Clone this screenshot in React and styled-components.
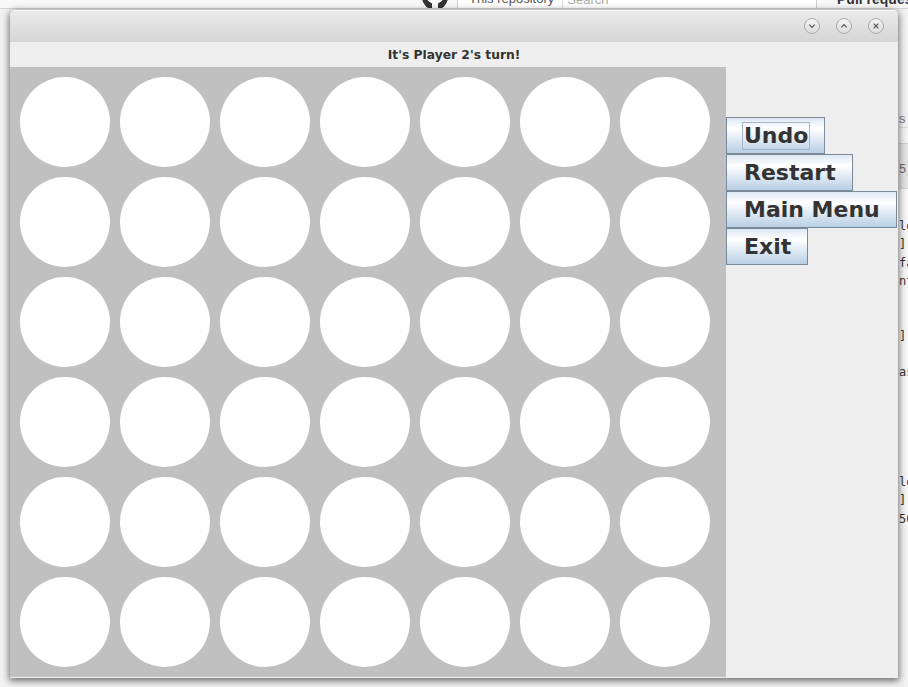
import React from "react";
import styled, { createGlobalStyle } from "styled-components";

const ROWS = 6;
const COLS = 7;

const codeLines = ["le", "]:", "fa", "nt", "  (", "", "]:", "", "as", "", "  W", "", "", "", "le", "]:", "50"];

export default function App() {
  return (
    <>
      <GlobalStyle />
      <Desktop>
        <Page>
          <TopBar>
            <TopBarInner>
              <Octocat viewBox="0 0 30 30">
                <circle cx="15" cy="15" r="13" fill="#333" />
                <circle cx="15" cy="13" r="9" fill="#f7f7f7" />
                <rect x="12" y="20" width="6" height="10" fill="#f7f7f7" />
              </Octocat>
              <SearchBox>
                <Scope>This repository</Scope>
                <Placeholder>Search</Placeholder>
              </SearchBox>
              <NavLink>Pull requests</NavLink>
            </TopBarInner>
          </TopBar>
          <PageBody>
            <SideContent>
              <TabText>s</TabText>
              <TabRule />
              <FileHeader>5,</FileHeader>
              <Code>
                {codeLines.map((line, i) => (
                  <CodeLine key={i}>{line || " "}</CodeLine>
                ))}
              </Code>
            </SideContent>
          </PageBody>
        </Page>

        <Window>
          <TitleBar>
            <WinButton>
              <svg width="8" height="8" viewBox="0 0 8 8">
                <path d="M1.3 2.6 L4 5.4 L6.7 2.6" />
              </svg>
            </WinButton>
            <WinButton>
              <svg width="8" height="8" viewBox="0 0 8 8">
                <path d="M1.3 5.4 L4 2.6 L6.7 5.4" />
              </svg>
            </WinButton>
            <WinButton>
              <svg width="8" height="8" viewBox="0 0 8 8">
                <path d="M1.6 1.6 L6.4 6.4 M6.4 1.6 L1.6 6.4" />
              </svg>
            </WinButton>
          </TitleBar>
          <StatusBar>It's Player 2's turn!</StatusBar>
          <Main>
            <Board>
              {Array.from({ length: ROWS * COLS }).map((_, i) => (
                <Slot key={i} />
              ))}
            </Board>
            <SidePanel>
              <GameButton>
                <Focus>Undo</Focus>
              </GameButton>
              <GameButton>Restart</GameButton>
              <GameButton>Main Menu</GameButton>
              <GameButton>Exit</GameButton>
            </SidePanel>
          </Main>
        </Window>
      </Desktop>
    </>
  );
}

const GlobalStyle = createGlobalStyle`
  html, body {
    margin: 0;
    padding: 0;
    width: 908px;
    height: 687px;
    overflow: hidden;
  }
  * {
    box-sizing: border-box;
  }
`;

const Desktop = styled.div`
  position: relative;
  width: 908px;
  height: 687px;
  overflow: hidden;
  background: #f2f2f2;
  font-family: "DejaVu Sans", "Liberation Sans", sans-serif;
`;

const Page = styled.div`
  display: flex;
  flex-direction: column;
  width: 100%;
  height: 100%;
`;

const TopBar = styled.div`
  height: 9px;
  overflow: hidden;
  background: #f8f8f8;
  border-bottom: 1px solid #d6d6d6;
`;

const TopBarInner = styled.div`
  display: flex;
  align-items: center;
  height: 20px;
  margin-top: -11px;
  padding-left: 420px;

  & > * {
    flex-shrink: 0;
  }
`;

const Octocat = styled.svg`
  width: 30px;
  height: 30px;
  margin-top: -4px;
`;

const SearchBox = styled.div`
  display: flex;
  align-items: center;
  margin-left: 7px;
  width: 360px;
  height: 28px;
  margin-top: -8px;
  padding-top: 8px;
  border: 1px solid #cfcfcf;
  background: #fff;
  font-family: "Liberation Sans", Arial, sans-serif;
  font-size: 13px;
`;

const Scope = styled.span`
  color: #555;
  padding: 0 8px 0 11px;
  border-right: 1px solid #dcdcdc;
  line-height: 20px;
`;

const Placeholder = styled.span`
  color: #aaa;
  padding-left: 4px;
`;

const NavLink = styled.span`
  margin-left: 20px;
  font-family: "Liberation Sans", Arial, sans-serif;
  font-weight: bold;
  font-size: 14px;
  color: #333;
  white-space: nowrap;
`;

const PageBody = styled.div`
  flex: 1;
  display: flex;
  padding-left: 899px;
`;

const SideContent = styled.div`
  display: flex;
  flex-direction: column;
  width: 200px;
  padding-top: 103px;
`;

const TabText = styled.div`
  font-family: "Liberation Sans", Arial, sans-serif;
  font-size: 13px;
  line-height: 14px;
  color: #777;
`;

const TabRule = styled.div`
  height: 1px;
  margin-top: 1px;
  background: #dcdcdc;
`;

const FileHeader = styled.div`
  margin-top: 15px;
  height: 46px;
  padding-top: 19px;
  background: #e2e2e2;
  border-top: 1px solid #cccccc;
  border-bottom: 1px solid #d0d0d0;
  font-family: "Liberation Mono", monospace;
  font-size: 12px;
  color: #666;
`;

const Code = styled.div`
  padding-top: 28px;
  background: #f6f6f6;
`;

const CodeLine = styled.div`
  font-family: "DejaVu Sans Mono", "Liberation Mono", monospace;
  font-size: 12px;
  line-height: 18.3px;
  height: 18.3px;
  color: #333;
  white-space: pre;
`;

const Window = styled.div`
  position: absolute;
  left: 10px;
  top: 10px;
  width: 888px;
  height: 668px;
  display: flex;
  flex-direction: column;
  background: #eeeeee;
  border-radius: 5px 5px 0 0;
  box-shadow: 0 2px 7px 1px rgba(0, 0, 0, 0.55);
  overflow: hidden;
`;

const TitleBar = styled.div`
  height: 32px;
  flex-shrink: 0;
  display: flex;
  justify-content: flex-end;
  align-items: center;
  gap: 16px;
  padding: 0 14px 2px 0;
  background: linear-gradient(#ebebeb, #d4d4d4);
  border-top: 1px solid #f6f6f6;
`;

const WinButton = styled.div`
  width: 16px;
  height: 16px;
  border-radius: 50%;
  border: 1px solid #acacac;
  background: linear-gradient(#f3f3f3, #dcdcdc);
  display: flex;
  align-items: center;
  justify-content: center;

  svg path {
    fill: none;
    stroke: #555;
    stroke-width: 1.2;
  }
`;

const StatusBar = styled.div`
  height: 25px;
  flex-shrink: 0;
  display: flex;
  align-items: center;
  justify-content: center;
  font-family: "DejaVu Sans", sans-serif;
  font-weight: bold;
  font-size: 12.3px;
  color: #333;
  background: #eeeeee;
`;

const Main = styled.div`
  flex: 1;
  display: flex;
`;

const Board = styled.div`
  width: 716px;
  height: 610px;
  flex-shrink: 0;
  display: grid;
  grid-template-columns: repeat(7, 90px);
  grid-auto-rows: 90px;
  gap: 10px;
  padding: 10px 0 0 10px;
  background: #c0c0c0;
`;

const Slot = styled.div`
  width: 90px;
  height: 90px;
  border-radius: 50%;
  background: #ffffff;
`;

const SidePanel = styled.div`
  flex: 1;
  display: flex;
  flex-direction: column;
  align-items: flex-start;
  padding-top: 50px;
  background: #eeeeee;
`;

const GameButton = styled.div`
  height: 37px;
  display: flex;
  align-items: center;
  padding: 0 16px 0 17px;
  border: 1px solid #7a8a99;
  background: linear-gradient(#dde8f3 0%, #ffffff 30%, #b8cfe5 100%);
  font-family: "DejaVu Sans", sans-serif;
  font-weight: bold;
  font-size: 22px;
  color: #333333;
  white-space: nowrap;
`;

const Focus = styled.span`
  display: inline-block;
  line-height: 26px;
  padding: 0 1px;
  margin: 0 -2px;
  border: 1px solid #a3b8cc;
`;
